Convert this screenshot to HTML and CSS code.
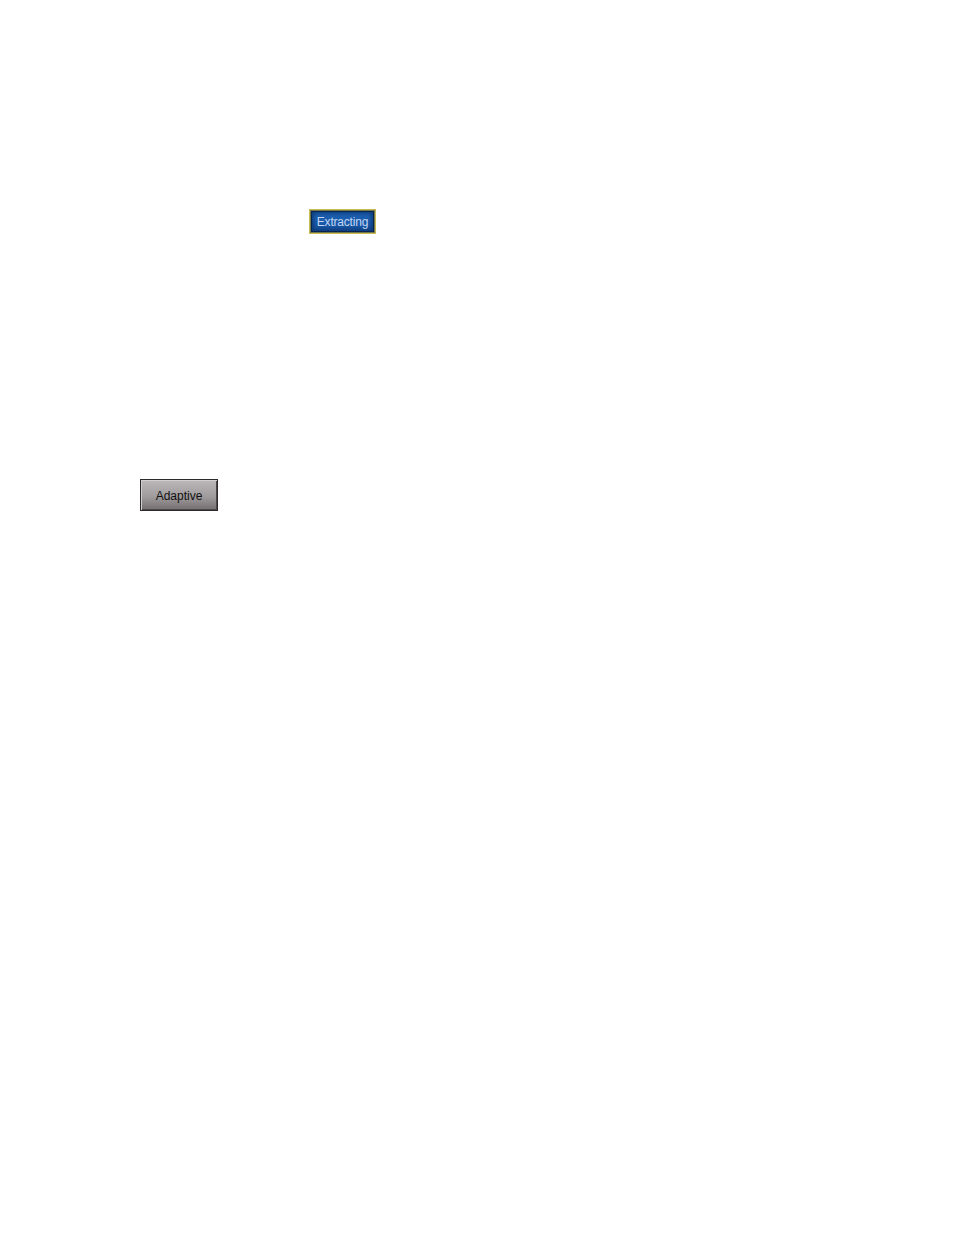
FILE: index.html
```html
<!DOCTYPE html>
<html>
<head>
  <meta name="viewport" content="width=device-width, initial-scale=1">
  <link rel="stylesheet" href="styles.css">
</head>
<body>
  <div class="page">
    <div class="row row-status">
      <span class="status-btn">Extracting</span>
    </div>
    <div class="row row-mode">
      <button class="mode-btn">Adaptive</button>
    </div>
  </div>
</body>
</html>
```
FILE: styles.css
```css
body {
  margin: 0;
  background-color: #fff;
  font-family: "Liberation Sans", Arial, sans-serif;
}
.page {
  display: flex;
  flex-direction: column;
  padding-top: 209px;
  height: 1235px;
  box-sizing: border-box;
}
.row {
  display: flex;
}
.row-status {
  padding-left: 309px;
}
.row-mode {
  padding-left: 140px;
  margin-top: 245px;
}
.status-btn {
  width: 67px;
  height: 25px;
  box-sizing: border-box;
  display: flex;
  align-items: center;
  justify-content: center;
  border: 1px solid #cbbb58;
  box-shadow: inset 0 0 0 1px #6f7a4a, inset 0 0 0 2px #0a2452, inset 0 0 5px 3px #0b3572;
  background: linear-gradient(#1f64b4, #1b5cac 50%, #144c94);
  color: #c2d6f2;
  font-size: 12px;
  letter-spacing: -0.2px;
}
.mode-btn {
  width: 78px;
  height: 32px;
  box-sizing: border-box;
  padding: 1px 0 0;
  border: 1px solid #2e2a2c;
  box-shadow: inset 1px 1px 0 #d2ced0, inset -1px -1px 0 #4c474a;
  background: linear-gradient(#bcb8ba, #a09b9d 55%, #736d70);
  color: #111;
  font-family: "Liberation Sans", Arial, sans-serif;
  font-size: 12px;
}
```
